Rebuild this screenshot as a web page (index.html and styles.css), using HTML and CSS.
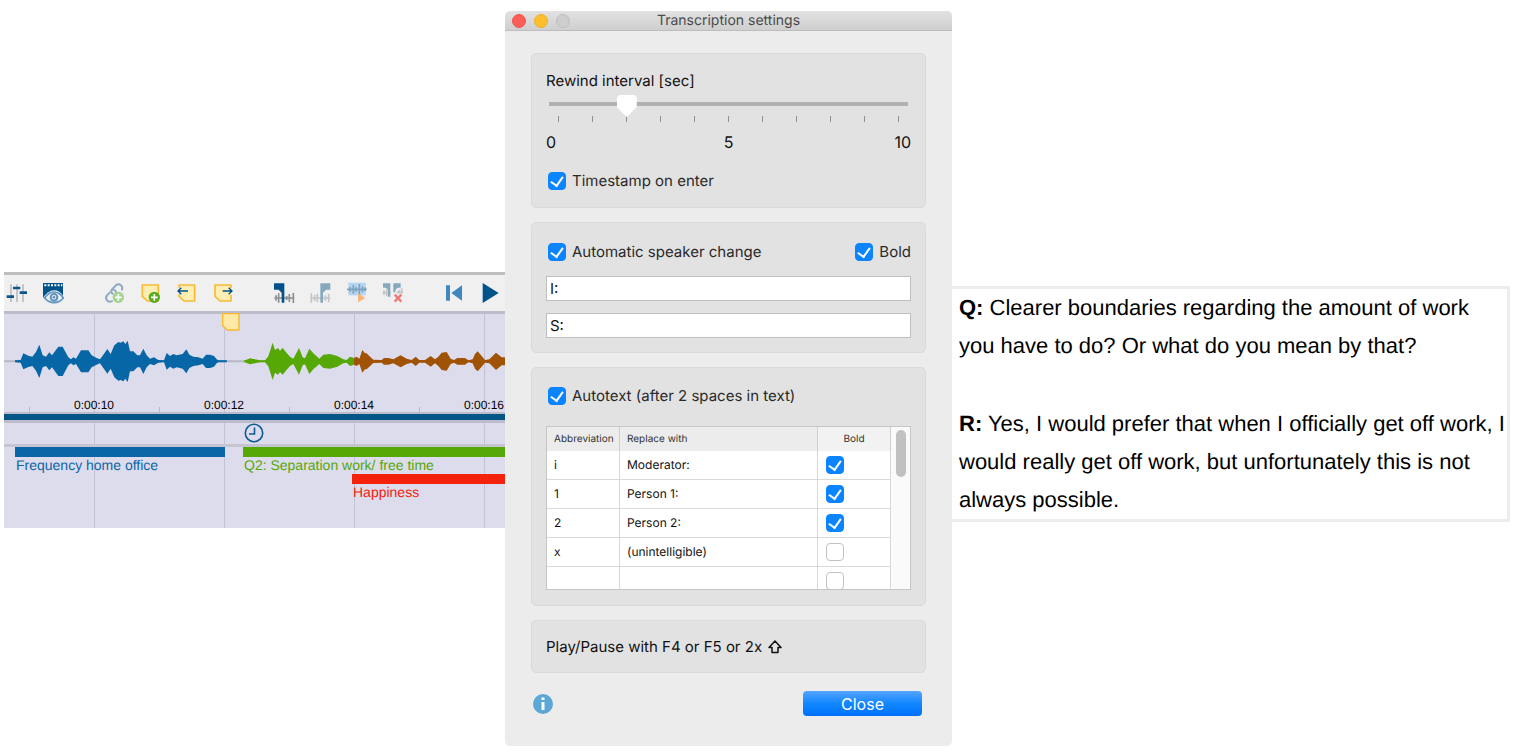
FILE: index.html
```html
<!DOCTYPE html>
<html lang="en">
<head>
    <meta charset="UTF-8">
    <meta name="viewport" content="width=device-width, initial-scale=1.0">
    <title>Transcription settings</title>
    <link rel="stylesheet" href="styles.css">
</head>
<body>
<main class="page">

    <section class="timeline">
        <div class="toolbar">
            <div class="tool-group">
                <button type="button" aria-label="Mixer"><svg viewBox="0 0 72 72"><path fill="#c3c5c8" d="M18 10h6v53h-6zM36 10h6v53h-6zM54 10h6v53h-6z"/><path fill="#0b568a" d="M8 43h22v8H8zM27 17h22v8H27zM47 31h22v8H47z"/></svg></button>
                <button type="button" aria-label="Show video"><svg viewBox="0 0 72 72"><path fill="#00528a" d="M9 6h60v57H9z"/><path stroke="#fff" stroke-width="6" stroke-dasharray="6 4" d="M13 13h54"/><path fill="#efefef" d="M9 51Q24 28 42 28T69 45V65H9z"/><path fill="#efefef" stroke="#5f93c0" stroke-width="5" d="M14 51Q26 33 42 33T70 51Q58 65 42 65T14 51z"/><circle cx="42" cy="49" r="10" fill="#efefef" stroke="#5f93c0" stroke-width="6"/><circle cx="42" cy="49" r="4" fill="#5f93c0"/></svg></button>
            </div>
            <div class="tool-group">
                <button type="button" aria-label="Add link"><svg viewBox="0 0 72 72"><g fill="none" stroke="#8ea9c4" stroke-width="6" stroke-linecap="round"><path d="M32 38Q24 32 30 25L42 13Q49 7 56 12T60 26"/><path d="M33 26Q44 28 42 38M23 35L15 43Q9 51 15 58T30 60"/></g><circle cx="49" cy="49" r="17" fill="#a5d391"/><path stroke="#fff" stroke-width="5" d="M39 49h20M49 39v20"/></svg></button>
                <button type="button" aria-label="Add memo"><svg viewBox="0 0 72 72"><path fill="#ffeeb3" stroke="#f4bb33" stroke-width="5" stroke-linejoin="round" d="M13 12H61V60H28L13 46z"/><circle cx="49" cy="49" r="17" fill="#58aa1e"/><path stroke="#fff" stroke-width="5" d="M39 49h20M49 39v20"/></svg></button>
                <button type="button" aria-label="Previous memo"><svg viewBox="0 0 72 72"><path fill="#ffeeb3" d="M15 12H62V60H30L15 46z"/><path fill="none" stroke="#f4bb33" stroke-width="5" stroke-linejoin="round" d="M15 20V12H62V60H30L15 46V40"/><path fill="none" stroke="#00528a" stroke-width="4" d="M42 30H12M22 20L12 30L22 40"/></svg></button>
                <button type="button" aria-label="Next memo"><svg viewBox="0 0 72 72"><path fill="#ffeeb3" d="M15 12H63V60H30L15 46z"/><path fill="none" stroke="#f4bb33" stroke-width="5" stroke-linejoin="round" d="M63 20V12H15V46L30 60H63V42"/><path fill="none" stroke="#00528a" stroke-width="4" d="M38 30H66M56 20L66 30L56 40"/></svg></button>
            </div>
            <div class="tool-group">
                <button type="button" aria-label="Set clip start"><svg viewBox="0 0 72 72"><path fill="none" stroke="#8d8f91" stroke-width="5" d="M7 51H67M12 43v16M20 37v28M44 45v12M52 39v24M64 36v30"/><path fill="#00528a" d="M6 7H37V65H29V35L20 26H6z"/></svg></button>
                <button type="button" aria-label="Set clip end"><svg viewBox="0 0 72 72"><path fill="none" stroke="#c3c5c7" stroke-width="5" d="M7 51H67M10 37v28M20 42v18M28 38v26M52 43v16M62 38v26"/><path fill="#85a8bd" d="M67 7H37V65H45V35L54 26H67z"/></svg></button>
                <button type="button" aria-label="Play clip"><svg viewBox="0 0 72 72"><path fill="#b5d6f0" d="M13 5H65V43H13z"/><path fill="none" stroke="#7ea3be" stroke-width="5" d="M9 25H68M18 18v14M28 12v26M36 18v14M46 9v32M55 16v18M63 19v12"/><path fill="#f6b57c" d="M42 37L64 51L42 64z"/></svg></button>
                <button type="button" aria-label="Delete clip"><svg viewBox="0 0 72 72"><path fill="none" stroke="#c3c5c7" stroke-width="5" d="M8 35H32M12 28v14M20 24v22M50 34H69M58 26v12M65 22v16"/><path fill="#85a8bd" d="M9 7H31V47H24V27L18 20H9zM62 7H40V34H46V27L53 20H62z"/><path stroke="#f07a78" stroke-width="7" d="M44 41L64 62M64 41L44 62"/></svg></button>
            </div>
            <div class="tool-group">
                <button type="button" aria-label="To start"><svg viewBox="0 0 72 72"><path fill="#3f87be" d="M12 13H24V59H12zM60 13V59L28 36z"/></svg></button>
                <button type="button" aria-label="Play"><svg viewBox="0 0 72 72"><path fill="#00528a" d="M14 6L62 36L14 66z"/></svg></button>
            </div>
        </div>

        <div class="tracks">
            <svg class="pin" viewBox="0 0 54 54"><path fill="#ffe9a6" stroke="#f5b92c" stroke-width="4" stroke-linejoin="round" d="M2 2H51V51H16L2 38z"/></svg>
            <div class="wave">
                <!-- upper half of the curve, mirrored below the axis -->
                <svg width="501" height="83" viewBox="12 -142 1503 249">
                    <path stroke="#b7b7c6" stroke-width="6" d="M12 0H1515"/>
                    <g id="half">
                        <path fill="#0666a6" d="M45 2V-3L62-4L70-24L85-17L97-14L108-28L118-50L128-18L138-14L148-27L156-18L175-44H188L205-12L213-6L220-12L228-8L243-33H265L275-18L290-10L300-6L310-20L322-37L332-22L343-48L355-58L362-56L370-60L376-52L383-62L390-30H400L412-18H420L430-38L440-18L450-8L462-12L475-4L492-3L500-25L510-16L520-22L530-18L548-22L559-36L568-20L580-14L595-12L608-8L618-20H630L642-16L650-6L655-3H680V2z"/>
                        <path fill="#55a805" d="M732 2V-2L750-9L765-6L780-3H795L805-15L818-56L825-34L834-40L840-32L848-40L860-25L870-14L880-8L897-40L908-12L915-9L928-38L940-24L958-8L970-20L990-22L1012-16L1030-6L1040-4L1050-14L1062-10V2z"/>
                        <path fill="#a15305" d="M1062 2V-10L1070-14L1078-8L1087-34L1095-24H1100L1108-16L1120-5L1145-4L1152-10H1165L1180-6L1202-18L1220-8L1235-4L1247-14L1258-4H1275L1292-16L1305-6L1315-14L1325-26L1340-28L1352-8L1362-4L1372-10H1395L1405-3L1418-6L1425-22L1433-30L1445-16L1455-4L1468-6L1488-26L1505-12H1515V2z"/>
                    </g>
                    <use href="#half" transform="scale(1 -1)"/>
                </svg>
            </div>
            <div class="ruler">
                <span>0:00:10</span>
                <span>0:00:12</span>
                <span>0:00:14</span>
                <span>0:00:16</span>
            </div>
            <div class="position-bar"></div>
            <div class="timestamps">
                <svg viewBox="0 0 20 20"><circle cx="10" cy="10" r="8.7" fill="none" stroke="#0b5c92" stroke-width="1.6"/><path fill="none" stroke="#0b5c92" stroke-width="1.6" d="M10.500 4.500V11H5"/></svg>
            </div>
            <div class="codes">
                <div class="code code-blue">Frequency home office</div>
                <div class="code code-green">Q2: Separation work/ free time</div>
                <div class="code code-red">Happiness</div>
            </div>
        </div>
    </section>

    <section class="dialog">
        <header class="titlebar">
            <div class="lights"><i class="red"></i><i class="yellow"></i><i></i></div>
            <h1>Transcription settings</h1>
        </header>
        <form class="dialog-body">
            <div class="panel">
                <label class="caption" for="rewind">Rewind interval [sec]</label>
                <input type="range" id="rewind" min="0" max="10" value="2">
                <div class="ticks"><i></i><i></i><i></i><i></i><i></i><i></i><i></i><i></i><i></i><i></i><i></i></div>
                <div class="scale"><span>0</span><span>5</span><span>10</span></div>
                <label class="check"><input type="checkbox" checked>Timestamp on enter</label>
            </div>

            <div class="panel speakers">
                <div class="row">
                    <label class="check"><input type="checkbox" checked>Automatic speaker change</label>
                    <label class="check"><input type="checkbox" checked>Bold</label>
                </div>
                <input type="text" value="I:" aria-label="First speaker">
                <input type="text" value="S:" aria-label="Second speaker">
            </div>

            <div class="panel autotext">
                <label class="check"><input type="checkbox" checked>Autotext (after 2 spaces in text)</label>
                <div class="table-box">
                    <table>
                        <thead>
                            <tr><th class="abbr">Abbreviation</th><th>Replace with</th><th class="bold">Bold</th></tr>
                        </thead>
                        <tbody>
                            <tr><td>i</td><td>Moderator:</td><td><input type="checkbox" aria-label="Bold" checked></td></tr>
                            <tr><td>1</td><td>Person 1:</td><td><input type="checkbox" aria-label="Bold" checked></td></tr>
                            <tr><td>2</td><td>Person 2:</td><td><input type="checkbox" aria-label="Bold" checked></td></tr>
                            <tr><td>x</td><td>(unintelligible)</td><td><input type="checkbox" aria-label="Bold"></td></tr>
                            <tr><td></td><td></td><td><input type="checkbox" aria-label="Bold"></td></tr>
                        </tbody>
                    </table>
                    <div class="scrollbar"><div class="thumb"></div></div>
                </div>
            </div>

            <div class="panel hint">
                <span>Play/Pause with F4 or F5 or 2x</span>
                <svg viewBox="0 0 14 14"><path fill="none" stroke="#111" stroke-width="1.500" stroke-linejoin="round" d="M7 1L13 7.500H10V12.500H4V7.500H1z"/></svg>
            </div>

            <footer class="row">
                <svg class="info" viewBox="0 0 20 20"><circle cx="10" cy="10" r="10" fill="#5ba7d6"/><path fill="#fff" d="M8.500 3.500h3v2.500h-3zM8.500 8h3v8h-3z"/></svg>
                <button type="button" class="close">Close</button>
            </footer>
        </form>
    </section>

    <section class="transcript">
        <p><b>Q:</b> Clearer boundaries regarding the amount of work you have to do? Or what do you mean by that?</p>
        <p><b>R:</b> Yes, I would prefer that when I officially get off work, I would really get off work, but unfortunately this is not always possible.</p>
    </section>

</main>
</body>
</html>
```
FILE: styles.css
```css
* { margin: 0; padding: 0; box-sizing: border-box; }
body {
    background: #fff;
    color: #111;
    font-family: Inter, "Liberation Sans", sans-serif;
    text-rendering: geometricPrecision;
}
button { border: none; background: none; font-family: inherit; }
.page {
    display: grid;
    grid-template-columns: 501fr 447fr 558fr;
    align-items: start;
    padding: 11px 8px 8px 4px;
}

/* timeline */
.timeline {
    margin-top: 261px;
    overflow: hidden;
    font-family: "Liberation Sans", Arial, sans-serif;
}
.toolbar {
    display: flex;
    align-items: center;
    gap: 38px;
    height: 42px;
    background: #f0f0f0;
    border-top: 3px solid #bebebe;
    border-bottom: 3px solid #bcbcca;
}
.tool-group { display: flex; gap: 12px; }
.tool-group button { width: 24px; height: 24px; flex: none; }
.tool-group svg { display: block; width: 24px; height: 24px; }
.tracks {
    position: relative;
    background: #dddcec linear-gradient(90deg, #c3c3d3 1px, transparent 1px) 90px 0 / 130px 100%;
}
.pin { position: absolute; left: 218px; top: -1px; width: 18px; height: 18px; }
.wave { height: 83px; }
.wave svg { display: block; }
.ruler {
    display: grid;
    grid-template-columns: repeat(4, 130px);
    height: 15px;
    padding-left: 25px;
    background: linear-gradient(90deg, #b9b9c9 1px, transparent 1px) 25px 10px / 130px 5px repeat-x;
    font-size: 12px;
    line-height: 16px;
    text-align: center;
    color: #000;
}
.position-bar {
    height: 11px;
    background: #045689;
    border-top: 2px solid #bcbcca;
    border-bottom: 3px solid #bcbcca;
}
.timestamps {
    height: 24px;
    padding-left: 240px;
    border-bottom: 3px solid #c4c4d2;
}
.timestamps svg { display: block; width: 20px; height: 20px; }
.codes {
    display: grid;
    grid-template-columns: 11px 210px 18px 109px 1fr;
    grid-auto-rows: 27px;
    height: 81px;
    font-size: 14px;
    line-height: 16px;
}
.code { border-top: 10px solid; padding-left: 1px; white-space: nowrap; }
.code-blue { grid-column: 2; color: #0b66a8; }
.code-green { grid-column: 4 / 6; color: #55a805; }
.code-red { grid-column: 5; color: #f4210c; }

/* settings dialog */
.dialog {
    background: #ececec;
    border-radius: 5px;
    font-size: 15px;
    line-height: 20px;
}
.titlebar {
    display: grid;
    grid-template-columns: 1fr auto 1fr;
    align-items: center;
    height: 20px;
    padding: 0 7px;
    background: linear-gradient(#e2e2e2, #cfcfcf);
    border-bottom: 1px solid #bdbdbd;
    border-radius: 5px 5px 0 0;
}
.titlebar h1 { font-size: 14px; font-weight: 400; color: #4b4b4b; }
.lights { display: flex; gap: 8px; }
.lights i { width: 14px; height: 14px; border-radius: 50%; background: #cecece; border: 1px solid #bdbdbd; }
.lights .red { background: #fc5f57; border-color: #ee544d; }
.lights .yellow { background: #fdbf2d; border-color: #f0b025; }
.dialog-body {
    display: flex;
    flex-direction: column;
    gap: 14px;
    padding: 22px 26px 30px;
}
.panel {
    padding: 17px 14px 16px;
    background: #e2e2e2;
    border: 1px solid #dadada;
    border-radius: 5px;
}
.row { display: flex; justify-content: space-between; align-items: center; }
.caption { display: block; }
.check { display: flex; align-items: center; gap: 6px; padding-left: 2px; color: #2a2a2a; }
input[type="checkbox"] {
    appearance: none;
    display: grid;
    place-items: center;
    width: 18px;
    height: 18px;
    background: #fff;
    border: 1px solid #c2c2c2;
    border-radius: 4px;
}
input[type="checkbox"]:checked { background: #0a84ff; border-color: #0a84ff; }
input[type="checkbox"]:checked::after {
    content: "";
    width: 6px;
    height: 10px;
    margin-bottom: 2px;
    border: solid #fff;
    border-width: 0 2px 2px 0;
    transform: rotate(35deg);
}
input[type="range"] {
    appearance: none;
    display: block;
    width: calc(100% - 6px);
    height: 24px;
    margin: 3px 3px 0;
    background: linear-gradient(#b1b1b1, #b1b1b1) 0 8px / 100% 4px no-repeat;
}
input[type="range"]::-webkit-slider-thumb {
    appearance: none;
    width: 20px;
    height: 22px;
    background: #fff;
    border-radius: 4px;
    clip-path: polygon(0 0, 100% 0, 100% 55%, 50% 100%, 0 55%);
}
.ticks { display: flex; justify-content: space-between; height: 6px; margin-top: -2px; padding: 0 12px; }
.ticks i { width: 1px; background: #8f8f8f; }
.scale { display: grid; grid-template-columns: 1fr auto 1fr; margin: 10px 0 19px; font-size: 16px; }
.scale span:last-child { text-align: right; }
.speakers { display: flex; flex-direction: column; gap: 12px; padding-top: 19px; padding-bottom: 14px; }
.speakers .row { margin-bottom: 2px; }
input[type="text"] {
    width: 100%;
    height: 25px;
    padding: 0 3px;
    border: 1px solid #bfbfbf;
    background: #fff;
    font: inherit;
    color: #111;
}
.autotext { padding-top: 18px; padding-bottom: 15px; }
.table-box {
    display: grid;
    grid-template-columns: 1fr 19px;
    height: 164px;
    margin-top: 20px;
    overflow: hidden;
    background: #fff;
    border: 1px solid #c6c6c6;
}
table { width: 100%; table-layout: fixed; border-spacing: 0; font-size: 12px; align-self: start; }
th {
    height: 24px;
    padding: 0 7px;
    background: #ececec;
    border-right: 1px solid #cfcfcf;
    font-size: 10px;
    font-weight: 400;
    line-height: 16px;
    text-align: left;
    white-space: nowrap;
    color: #333;
}
td { height: 29px; padding: 0 7px; line-height: 16px; border-right: 1px solid #d9d9d9; border-bottom: 1px solid #d9d9d9; }
td:last-child { padding-left: 8px; }
th:last-child { background: #f2f2f2; text-align: center; }
.abbr { width: 73px; }
.bold { width: 73px; }
.scrollbar { padding: 3px 4px 0 5px; background: #fafafa; }
.thumb { height: 47px; border-radius: 5px; background: #c1c1c1; }
.hint { display: flex; align-items: center; gap: 6px; padding-top: 16px; padding-bottom: 15px; }
.hint svg { width: 14px; height: 14px; }
footer { padding: 4px 4px 0 2px; }
.info { width: 20px; height: 20px; }
.close {
    width: 119px;
    height: 25px;
    border-radius: 4px;
    background: linear-gradient(#56a4ff, #1187ff 50%, #0070fb);
    color: #fff;
    font-size: 16px;
}

/* transcript */
.transcript {
    margin-top: 275px;
    padding-left: 7px;
    border: 3px solid #ececec;
    border-left: none;
    font-family: "Liberation Sans", Arial, sans-serif;
    font-size: 22px;
    line-height: 38px;
    color: #000;
}
.transcript p + p { margin-top: 40px; }
```
